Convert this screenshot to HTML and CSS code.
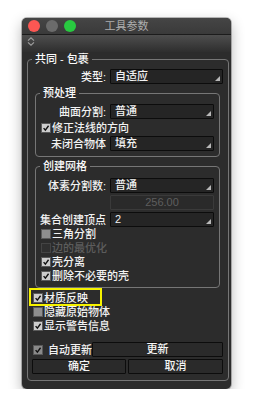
FILE: index.html
```html
<!DOCTYPE html>
<html lang="zh">
<head>
    <meta charset="UTF-8">
    <meta name="viewport" content="width=device-width, initial-scale=1.0">
    <title>工具参数</title>
    <link rel="stylesheet" href="styles.css">
</head>
<body>
    <div class="window">
        <header class="titlebar">
            <div class="lights">
                <span class="light red"></span>
                <span class="light gray"></span>
                <span class="light green"></span>
            </div>
            <span class="title">工具参数</span>
        </header>

        <div class="toolbar">
            <svg class="sort-icon" width="8" height="9" viewBox="0 0 8 9">
                <path d="M1 3.6 L4 0.8 L7 3.6 M1 5.4 L4 8.2 L7 5.4" fill="none" stroke="#9c9c9c" stroke-width="1.2"/>
            </svg>
        </div>

        <div class="content">
            <fieldset class="group outer">
                <legend>共同 - 包裹</legend>

                <div class="row row-first">
                    <span class="label label-wide">类型:</span>
                    <div class="select">自适应</div>
                </div>

                <fieldset class="group inner">
                    <legend>预处理</legend>
                    <div class="row row-first-inner">
                        <span class="label">曲面分割:</span>
                        <div class="select">普通</div>
                    </div>
                    <div class="check check-tall">
                        <span class="box on"><svg viewBox="0 0 10 10"><path d="M2 5.2 L4.2 7.6 L8.2 2.2"/></svg></span>修正法线的方向
                    </div>
                    <div class="row row-tight">
                        <span class="label">未闭合物体</span>
                        <div class="select">填充</div>
                    </div>
                </fieldset>

                <fieldset class="group inner second">
                    <legend>创建网格</legend>
                    <div class="row row-first-mesh">
                        <span class="label">体素分割数:</span>
                        <div class="select">普通</div>
                    </div>
                    <div class="row row-gap">
                        <span class="label"></span>
                        <div class="field disabled">256.00</div>
                    </div>
                    <div class="row row-gap">
                        <span class="label">集合创建顶点</span>
                        <div class="select">2</div>
                    </div>
                    <div class="check">
                        <span class="box off"></span>三角分割
                    </div>
                    <div class="check dim">
                        <span class="box dead"></span>边的最优化
                    </div>
                    <div class="check">
                        <span class="box on"><svg viewBox="0 0 10 10"><path d="M2 5.2 L4.2 7.6 L8.2 2.2"/></svg></span>壳分离
                    </div>
                    <div class="check">
                        <span class="box on"><svg viewBox="0 0 10 10"><path d="M2 5.2 L4.2 7.6 L8.2 2.2"/></svg></span>删除不必要的壳
                    </div>
                </fieldset>

                <div class="checks">
                    <div class="check marked">
                        <span class="box on"><svg viewBox="0 0 10 10"><path d="M2 5.2 L4.2 7.6 L8.2 2.2"/></svg></span>材质反映
                    </div>
                    <div class="check">
                        <span class="box off"></span>隐藏原始物体
                    </div>
                    <div class="check">
                        <span class="box on"><svg viewBox="0 0 10 10"><path d="M2 5.2 L4.2 7.6 L8.2 2.2"/></svg></span>显示警告信息
                    </div>
                </div>

                <div class="actions">
                    <div class="auto">
                        <span class="box on soft"><svg viewBox="0 0 10 10"><path d="M2 5.2 L4.2 7.6 L8.2 2.2"/></svg></span>
                        <span class="auto-text">自动更新</span>
                    </div>
                    <button class="btn btn-update">更新</button>
                </div>
                <div class="buttons">
                    <button class="btn">确定</button>
                    <button class="btn">取消</button>
                </div>
            </fieldset>
        </div>
    </div>
</body>
</html>
```

FILE: styles.css
```css
html {
  box-sizing: border-box;
  font-family: "Liberation Sans", "Noto Sans CJK SC", sans-serif;
  font-size: 11px;
  font-weight: 500;
}

*,
*:before,
*:after {
  box-sizing: inherit;
}

body {
  margin: 0;
  background: #fff;
}

.window {
  margin: 18px 0 0 22px;
  width: 209px;
  height: 371px;
  background: #2c2c2c;
  border-radius: 5px;
  box-shadow: 0 0 0 1px rgba(0, 0, 0, 0.25), 0 5px 14px rgba(0, 0, 0, 0.3);
  display: flex;
  flex-direction: column;
  color: #f2f2f2;
  overflow: hidden;
}

/* title bar */
.titlebar {
  height: 17px;
  display: grid;
  grid-template-columns: 1fr auto 1fr;
  align-items: center;
  background: linear-gradient(#454545, #3a3a3a);
  border-bottom: 1px solid #1c1c1c;
}

.lights {
  display: flex;
  gap: 6px;
  padding-left: 6px;
}

.light {
  width: 12px;
  height: 12px;
  border-radius: 50%;
}

.light.red {
  background: #fc5753;
}

.light.gray {
  background: #6b6b6b;
}

.light.green {
  background: #28c940;
}

.title {
  color: #aeaeae;
  line-height: 16px;
  font-weight: normal;
}

/* toolbar */
.toolbar {
  height: 17px;
  padding: 2px 0 0 5px;
  background: linear-gradient(#4e4e4e, #2e2e2e);
}

.sort-icon {
  display: block;
}

/* groups */
.content {
  padding: 0 2px 0 5px;
}

.group {
  margin: 0;
  border: 1px solid #767676;
  border-radius: 4px;
  min-width: 0;
}

.group legend {
  padding: 0 3px;
  line-height: 14px;
  color: #fafafa;
}

.outer {
  padding: 0 5px 6px 5px;
}

.outer > legend {
  margin-left: -1px;
}

.inner {
  margin: 2px 3px 0 2px;
  padding: 0 5px 5px 4px;
}

.inner.second {
  padding-bottom: 4px;
}

/* rows */
.row {
  display: flex;
  gap: 4px;
  height: 15px;
  align-items: center;
}

.row-first {
  margin-top: 3px;
}

.row-first-inner {
  margin-top: 4px;
}

.row-first-mesh {
  margin-top: 5px;
}

.row-tight {
  margin-top: 1px;
}

.row-gap {
  margin-top: 2px;
}

.label {
  width: 66px;
  flex: none;
  text-align: right;
  white-space: nowrap;
  line-height: 14px;
}

.label-wide {
  width: 73px;
}

.select,
.field {
  flex: 1;
  height: 15px;
  line-height: 13px;
  border: 1px solid #0c0c0c;
  border-radius: 1px;
  background: #252525;
  padding-left: 4px;
  white-space: nowrap;
}

.select {
  position: relative;
}

.select:after {
  content: "";
  position: absolute;
  right: 2px;
  bottom: 2px;
  border-left: 5px solid transparent;
  border-bottom: 5px solid #b8b8b8;
}

.field.disabled {
  background: #2a2a2a;
  border-color: #3a3a3a;
  color: #5e5e5e;
  text-align: center;
  padding-left: 0;
}

/* checkboxes */
.check {
  display: flex;
  align-items: center;
  height: 14px;
  line-height: 14px;
  white-space: nowrap;
}

.check-tall {
  height: 15px;
  margin-top: 1px;
}

.inner .box {
  margin-left: 1px;
}

.box {
  width: 10px;
  height: 10px;
  flex: none;
  margin-right: 1px;
  background: #cdcdcd;
  border: 1px solid #5a5a5a;
}

.box svg {
  display: block;
  width: 8px;
  height: 8px;
}

.box svg path {
  fill: none;
  stroke: #111;
  stroke-width: 1.7;
}

.box.off {
  background: #8e8e8e;
}

.box.dead {
  background: #303030;
  border-color: #444;
}

.box.soft {
  background: #8a8a8a;
}

.check.dim {
  color: #5c5c5c;
}

.checks {
  margin-top: 3px;
}

.check.marked {
  position: relative;
}

.check.marked:after {
  content: "";
  position: absolute;
  left: -4px;
  top: -3px;
  width: 73px;
  height: 18px;
  border: 2px solid #f6f200;
}

/* buttons */
.actions {
  display: flex;
  align-items: center;
  margin-top: 9px;
  height: 15px;
}

.auto {
  display: flex;
  align-items: center;
  width: 59px;
  flex: none;
}

.auto-text {
  margin-left: 4px;
  line-height: 14px;
}

.btn {
  font: inherit;
  color: #f4f4f4;
  height: 15px;
  line-height: 13px;
  padding: 0;
  background: #2a2a2a;
  border: 1px solid #0c0c0c;
  border-radius: 1px;
}

.btn-update {
  flex: 1;
}

.buttons {
  display: grid;
  grid-template-columns: 94px 1fr;
  gap: 2px;
  margin-top: 2px;
  margin-left: -1px;
}
```
